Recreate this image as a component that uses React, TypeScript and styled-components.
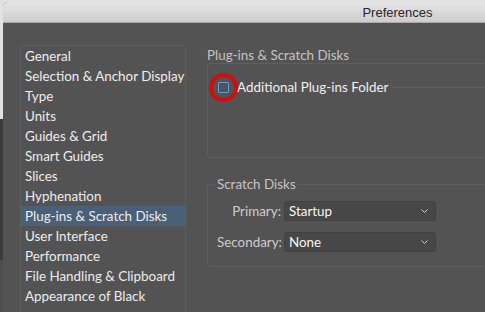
import React from 'react';
import styled, { createGlobalStyle } from 'styled-components';

const GlobalStyle = createGlobalStyle`
  html, body {
    margin: 0;
    overflow: hidden;
  }
  body {
    background: linear-gradient(
      to bottom,
      #e2e2e2 0 119px,
      #3b3b3b 119px 260px,
      #4e4e4e 260px
    );
    font-family: Lato, 'Open Sans', sans-serif;
  }
`;

const Window = styled.div`
  margin: 2px 0 0 3px;
  width: 789px;
  height: 310px;
  background: #535353;
  border-radius: 5px 5px 0 0;
  overflow: hidden;
`;

const TitleBar = styled.div`
  height: 20px;
  line-height: 21px;
  text-align: center;
  font-family: 'Liberation Sans', Arial, sans-serif;
  font-size: 13px;
  color: #262626;
  background: linear-gradient(to bottom, #e6e6e6, #cdcdcd);
  border-bottom: 1px solid #a9a9a9;
`;

const Body = styled.div`
  display: flex;
  gap: 21px;
  padding: 22px 0 0 17px;
`;

const SideList = styled.ul`
  list-style: none;
  margin: 0;
  padding: 0;
  width: 164px;
  height: 280px;
  flex-shrink: 0;
  border: 1px solid #5f5f5f;
  border-radius: 3px;
`;

const SideItem = styled.li<{ $active?: boolean }>`
  height: 20px;
  line-height: 20px;
  padding-left: 4px;
  font-size: 13.4px;
  color: #ededed;
  white-space: nowrap;
  background: ${(p) => (p.$active ? '#4a6079' : 'transparent')};
`;

const Content = styled.div`
  flex: 1;
  display: flex;
  flex-direction: column;
`;

const SectionTitle = styled.div`
  padding-top: 2px;
  line-height: 16px;
  font-size: 13.4px;
  color: #c4c4c4;
`;

const GroupBox = styled.div`
  height: 77px;
  padding: 16px 0 0 10px;
  border: 1px solid #5f5f5f;
  border-right: none;
  border-radius: 4px 0 0 4px;
`;

const CheckRow = styled.label`
  display: flex;
  align-items: center;
  height: 14px;
`;

const CheckWrap = styled.span`
  position: relative;
  display: inline-flex;
`;

const CheckBox = styled.span`
  box-sizing: border-box;
  width: 11px;
  height: 11px;
  border: 1px solid #6e9bd1;
  border-radius: 1px;
  background: #4c5360;
`;

const Highlight = styled.span`
  position: absolute;
  left: -9px;
  top: -9px;
  box-sizing: border-box;
  width: 29px;
  height: 29px;
  border: 4px solid #d30d0d;
  border-radius: 50%;
`;

const CheckText = styled.span`
  margin-left: 8px;
  font-size: 13.4px;
  color: #f0f0f0;
  white-space: nowrap;
`;

const Rule = styled.span`
  flex: 1;
  height: 1px;
  margin-left: 3px;
  background: #5e5e5e;
`;

const Fieldset = styled.fieldset`
  margin: 18px 0 0 0;
  padding: 0 0 14px 9px;
  min-width: 0;
  border: 1px solid #5f5f5f;
  border-right: none;
  border-radius: 4px 0 0 4px;
`;

const Legend = styled.legend`
  padding: 0 2px;
  margin-left: -2px;
  line-height: 16px;
  font-size: 13.4px;
  color: #c4c4c4;
`;

const FormGrid = styled.div`
  display: grid;
  grid-template-columns: 64px 152px;
  grid-auto-rows: 20px;
  column-gap: 3px;
  row-gap: 11px;
  margin-top: 9px;
`;

const FieldLabel = styled.span`
  text-align: right;
  line-height: 20px;
  font-size: 13.4px;
  color: #cdcdcd;
`;

const Select = styled.div`
  display: flex;
  align-items: center;
  justify-content: space-between;
  box-sizing: border-box;
  padding: 0 7px 0 4px;
  background: #474747;
  border: 1px solid #414141;
  border-radius: 3px;
  font-size: 13.4px;
  color: #f7f7f7;
`;

const Chevron = () => (
  <svg width="7" height="4" viewBox="0 0 7 4">
    <polyline points="0.5,0.5 3.5,3.5 6.5,0.5" fill="none" stroke="#cfcfcf" strokeWidth="1" />
  </svg>
);

const sections = [
  'General',
  'Selection & Anchor Display',
  'Type',
  'Units',
  'Guides & Grid',
  'Smart Guides',
  'Slices',
  'Hyphenation',
  'Plug-ins & Scratch Disks',
  'User Interface',
  'Performance',
  'File Handling & Clipboard',
  'Appearance of Black',
];

const disks = [
  { label: 'Primary:', value: 'Startup' },
  { label: 'Secondary:', value: 'None' },
];

export default function App() {
  return (
    <>
      <GlobalStyle />
      <Window>
        <TitleBar>Preferences</TitleBar>
        <Body>
          <SideList>
            {sections.map((s) => (
              <SideItem key={s} $active={s === 'Plug-ins & Scratch Disks'}>
                {s}
              </SideItem>
            ))}
          </SideList>
          <Content>
            <SectionTitle>Plug-ins &amp; Scratch Disks</SectionTitle>
            <GroupBox>
              <CheckRow>
                <CheckWrap>
                  <CheckBox />
                  <Highlight />
                </CheckWrap>
                <CheckText>Additional Plug-ins Folder</CheckText>
                <Rule />
              </CheckRow>
            </GroupBox>
            <Fieldset>
              <Legend>Scratch Disks</Legend>
              <FormGrid>
                {disks.map((d) => (
                  <React.Fragment key={d.label}>
                    <FieldLabel>{d.label}</FieldLabel>
                    <Select>
                      {d.value}
                      <Chevron />
                    </Select>
                  </React.Fragment>
                ))}
              </FormGrid>
            </Fieldset>
          </Content>
        </Body>
      </Window>
    </>
  );
}
